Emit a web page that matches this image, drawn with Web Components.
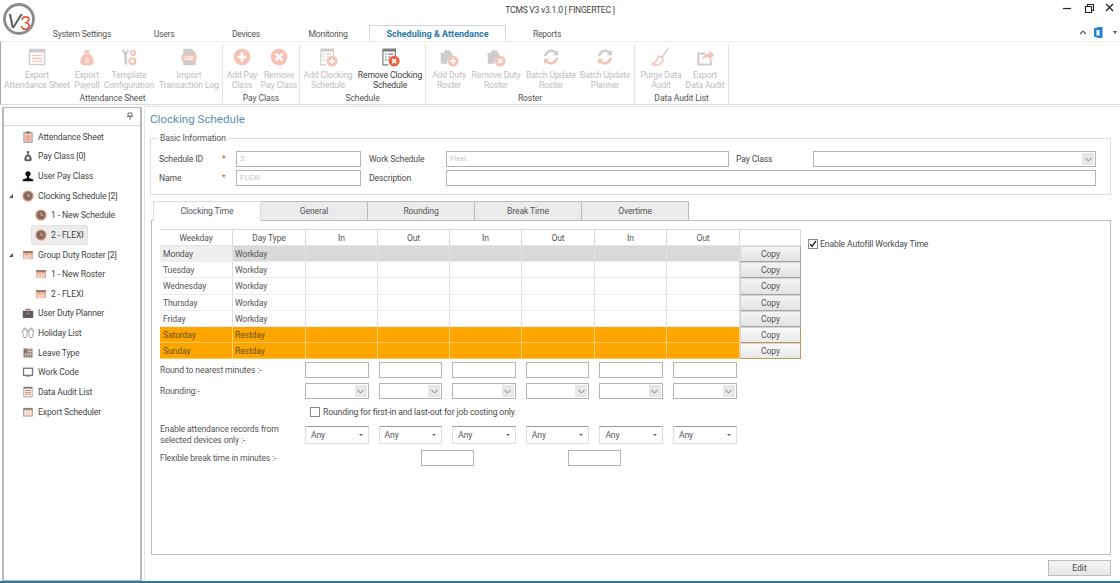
<!DOCTYPE html>
<html>
<head>
<meta charset="utf-8">
<title>TCMS V3</title>
<style>
  html, body { margin: 0; height: 100%; overflow: hidden; background: #fff; }
  body { font: 8.6px Roboto, "Liberation Sans", sans-serif; letter-spacing: -0.12px; color: #4a4a4a; }
</style>
</head>
<body>
<tcms-window>
  <title-bar slot="top"></title-bar>
  <ribbon-tabs slot="top"></ribbon-tabs>
  <ribbon-bar slot="top">
    <ribbon-group label="Attendance Sheet" width="220">
      <ribbon-button icon="sheet" w="68">Export<br>Attendance Sheet</ribbon-button>
      <ribbon-button icon="bag" w="32">Export<br>Payroll</ribbon-button>
      <ribbon-button icon="tools" w="52">Template<br>Configuration</ribbon-button>
      <ribbon-button icon="log" w="68">Import<br>Transaction Log</ribbon-button>
    </ribbon-group>
    <ribbon-group label="Pay Class" width="77">
      <ribbon-button icon="plus" w="38">Add Pay<br>Class</ribbon-button>
      <ribbon-button icon="cross" w="36">Remove<br>Pay Class</ribbon-button>
    </ribbon-group>
    <ribbon-group label="Schedule" width="126">
      <ribbon-button icon="docplus" w="56">Add Clocking<br>Schedule</ribbon-button>
      <ribbon-button icon="doccross" w="68" active>Remove Clocking<br>Schedule</ribbon-button>
    </ribbon-group>
    <ribbon-group label="Roster" width="209">
      <ribbon-button icon="rosterplus" w="46">Add Duty<br>Roster</ribbon-button>
      <ribbon-button icon="rostercross" w="48">Remove Duty<br>Roster</ribbon-button>
      <ribbon-button icon="sync" w="62">Batch Update<br>Roster</ribbon-button>
      <ribbon-button icon="sync" w="46">Batch Update<br>Planner</ribbon-button>
    </ribbon-group>
    <ribbon-group label="Data Audit List" width="94">
      <ribbon-button icon="broom" w="52">Purge Data<br>Audit</ribbon-button>
      <ribbon-button icon="export" w="36">Export<br>Data Audit</ribbon-button>
    </ribbon-group>
  </ribbon-bar>
  <nav-tree slot="side">
    <tree-item icon="clip">Attendance Sheet</tree-item>
    <tree-item icon="money">Pay Class [0]</tree-item>
    <tree-item icon="user">User Pay Class</tree-item>
    <tree-item icon="clock" arrow>Clocking Schedule [2]</tree-item>
    <tree-item icon="clock" child>1 - New Schedule</tree-item>
    <tree-item icon="clock" child selected>2 - FLEXI</tree-item>
    <tree-item icon="roster" arrow>Group Duty Roster [2]</tree-item>
    <tree-item icon="roster" child>1 - New Roster</tree-item>
    <tree-item icon="roster" child>2 - FLEXI</tree-item>
    <tree-item icon="case">User Duty Planner</tree-item>
    <tree-item icon="flops">Holiday List</tree-item>
    <tree-item icon="grid">Leave Type</tree-item>
    <tree-item icon="code">Work Code</tree-item>
    <tree-item icon="lines">Data Audit List</tree-item>
    <tree-item icon="sched">Export Scheduler</tree-item>
  </nav-tree>
  <clocking-page slot="main"></clocking-page>
</tcms-window>

<script>
const ORANGE = "#e9623f";
const GREY = "#7d7d7d";

const badge = (kind) => `
  <circle cx="17" cy="17" r="6.5" fill="${ORANGE}"/>
  ${kind === "plus"
    ? `<path d="M17 13.6v6.8M13.6 17h6.8" stroke="#fff" stroke-width="2"/>`
    : `<path d="M14.6 14.6l4.8 4.8M19.4 14.6l-4.8 4.8" stroke="#fff" stroke-width="2"/>`}`;

const docLines = `
  <path d="M3.5 2.5h15v9M10 21.5H3.5v-19" fill="#fff" stroke="${GREY}" stroke-width="1.4"/>
  <rect x="3.5" y="2.5" width="15" height="3" fill="${GREY}"/>
  <path d="M6 8.5h2M10 8.5h6M6 12h2M10 12h3M6 15.5h2M10 15.5h1" stroke="${GREY}" stroke-width="1.4"/>`;

const folder = `
  <path d="M2 7h4l1-3h6l1 3h2v4a7 7 0 0 0-6 9H2z" fill="${GREY}"/>`;

const RIBBON_ICONS = {
  sheet: `<rect x="3" y="3" width="18" height="18" fill="#fff" stroke="${GREY}" stroke-width="1.6"/>
    <rect x="3" y="3" width="18" height="3.5" fill="${GREY}"/>
    <path d="M6 10h12M6 13.5h12M6 17h12" stroke="${ORANGE}" stroke-width="1.5"/>`,
  bag: `<path d="M8 2.500l2 2 2-1.500 2 1.500 2-2-1.500 5h-5z" fill="${ORANGE}"/>
    <path d="M9 8h6c3 2.500 5 6 5 9.500 0 3-2 4.500-4 4.500H8c-2 0-4-1.500-4-4.500C4 14 6 10.500 9 8z" fill="${ORANGE}"/>
    <text x="12" y="19" text-anchor="middle" font-size="9" fill="#fff" font-family="Roboto">$</text>`,
  tools: `<path d="M6 2c-1.500.5-2 2-2 3 0 1.500 1 2.500 2 3l1 13h3l-.5-13c1.500-.8 2-2 2-3.200 0-1-.4-2-1.500-2.800v3.500H7z" fill="${GREY}"/>
    <circle cx="17" cy="7" r="2.600" fill="none" stroke="${ORANGE}" stroke-width="2.200"/>
    <circle cx="16" cy="17" r="3.500" fill="none" stroke="${ORANGE}" stroke-width="2.600"/>`,
  log: `<path d="M5 2h10l5 5v15H5z" fill="${GREY}"/>
    <rect x="3" y="9" width="18" height="8" rx="1" fill="${ORANGE}"/>
    <text x="12" y="15.500" text-anchor="middle" font-size="6" font-weight="700" fill="#fff" font-family="Roboto">LOG</text>`,
  plus: `<circle cx="12" cy="12" r="10" fill="${ORANGE}"/><path d="M12 6.500v11M6.500 12h11" stroke="#fff" stroke-width="3.200"/>`,
  cross: `<circle cx="12" cy="12" r="10" fill="${ORANGE}"/><path d="M8 8l8 8M16 8l-8 8" stroke="#fff" stroke-width="3.200"/>`,
  docplus: docLines + badge("plus"),
  doccross: docLines + badge("cross"),
  rosterplus: folder + badge("plus"),
  rostercross: folder + badge("cross"),
  sync: `<path d="M5 11a7.500 7.500 0 0 1 13-4" fill="none" stroke="${GREY}" stroke-width="3"/>
    <path d="M20.500 3.500v6.500h-6.500z" fill="${GREY}"/>
    <path d="M19 13a7.500 7.500 0 0 1-13 4" fill="none" stroke="${ORANGE}" stroke-width="3"/>
    <path d="M3.500 20.500v-6.500h6.500z" fill="${ORANGE}"/>`,
  broom: `<path d="M21 1l-8 12" stroke="${GREY}" stroke-width="1.500"/>
    <path d="M9 11c2 0 5 1.500 6 4-1 4-6 7-9 7-2 0-4-1-5-2 3 0 6-3 8-9z" fill="none" stroke="${ORANGE}" stroke-width="1.800"/>`,
  export: `<path d="M12 8H4v13h15v-6" fill="none" stroke="${GREY}" stroke-width="2.600"/>
    <path d="M8 17c0-6 4-9 9-9V4l6 6-6 6v-4c-4 0-7 1-9 5z" fill="${ORANGE}"/>`,
};

const TREE_ICONS = {
  clip: `<rect x="2.500" y="2" width="11" height="13" fill="#f4c6b4" stroke="#888"/>
    <rect x="5.500" y=".5" width="5" height="3" fill="#777"/>
    <path d="M5 7h6M5 9.500h6M5 12h6" stroke="#d98a70"/>`,
  money: `<path d="M6 1l2 1 2-1-1 4H7z" fill="#555"/>
    <path d="M6.500 5.500h3C12 7.500 13 10 13 12c0 2-1 3-3 3H6c-2 0-3-1-3-3 0-2 1-4.500 3.500-6.500z" fill="#666"/>
    <circle cx="8" cy="10.500" r="2" fill="#eee"/>`,
  user: `<circle cx="8" cy="5" r="3.500" fill="#111"/><path d="M6.500 8h3v2.500l5.500 2V15H1v-2.500l5.500-2z" fill="#111"/>`,
  clock: `<circle cx="8" cy="8" r="6.500" fill="#7a6a62" stroke="#e58a68" stroke-width="1.800"/>
    <path d="M8 4.500V8.300h3.200" fill="none" stroke="#ddd" stroke-width="1"/>`,
  roster: `<rect x="1.500" y="3" width="13" height="10.500" fill="#e9a68d"/>
    <rect x="1.500" y="3" width="13" height="2" fill="#8a6a5a"/>
    <path d="M4 7v6M6.500 9v4M9 6.500v6.500M11.500 8v5" stroke="#fff" stroke-width="1.200"/>`,
  case: `<rect x="1" y="5" width="14" height="9.500" rx="1" fill="#5d5d5d"/>
    <path d="M5.500 5V3h5v2" fill="none" stroke="#5d5d5d" stroke-width="1.300"/>
    <rect x="6" y="8" width="4" height="1.500" fill="#e58a68"/>`,
  flops: `<path d="M4 1.500C1.500 1.500.5 4 1 7.500c.4 3 1 7 3 7s2.600-4 3-7c.4-3.500-.6-6-3-6zM12 1.500c-2.400 0-3.400 2.500-3 6 .4 3 1 7 3 7s2.600-4 3-7c.5-3.500-.5-6-3-6z" fill="#fff" stroke="#8a8a8a" stroke-width="1.100"/>
    <path d="M1.500 5.500L4 3l2.500 2.500M9.500 5.500L12 3l2.500 2.500" fill="none" stroke="#8a8a8a"/>`,
  grid: `<rect x="2" y="2" width="12" height="12" fill="#8c7168"/>
    <path d="M8 2.500h5.500M8 6h5.500M8 9.500h5.500M2.500 9.500h5M8 2.500v11M11 2.500v11M5 9.500v4" stroke="#eee" stroke-width=".8"/>`,
  code: `<rect x="2" y="3" width="12" height="9.500" fill="#fff" stroke="#777" stroke-width="1.800"/>
    <path d="M5 12.500h6v1.500H5z" fill="#777"/>`,
  lines: `<rect x="2.500" y="1.500" width="11" height="13" fill="#fff" stroke="#888"/>
    <rect x="2.500" y="1.500" width="11" height="2" fill="#777"/>
    <path d="M4 6h8M4 8.500h8M4 11h8" stroke="#e0764f" stroke-width="1.200"/>`,
  sched: `<rect x="2" y="3" width="12" height="10.500" fill="#f0b9a3" stroke="#999"/>
    <rect x="2" y="3" width="12" height="2" fill="#777"/>
    <path d="M5 5v8M8 5v8M11 5v8M2.500 8h11M2.500 10.500h11" stroke="#fff" stroke-width=".8"/>`,
};

class TcmsWindow extends HTMLElement {
  constructor() {
    super();
    this.attachShadow({ mode: "open" });
    this.shadowRoot.innerHTML = `
      <style>
        :host { display: flex; flex-direction: column; width: 1120px; height: 583px; box-sizing: border-box;
          border-bottom: 2px solid #2f7698; background: #fff; }
        .body { flex: 1; display: flex; min-height: 0; margin-top: 2px; }
        .side { width: 140px; margin-left: 2px; border: 1px solid #b8b8b8; border-width: 1px 2px 1px 2px; box-sizing: border-box; }
        .main { flex: 1; margin-left: 2px; min-width: 0; margin-top: -1px; }
      </style>
      <slot name="top"></slot>
      <div class="body">
        <div class="side"><slot name="side"></slot></div>
        <div class="main"><slot name="main"></slot></div>
      </div>`;
  }
}

class TitleBar extends HTMLElement {
  constructor() {
    super();
    this.attachShadow({ mode: "open" });
    this.shadowRoot.innerHTML = `
      <style>
        :host { display: block; height: 25px; position: relative; }
        .title { text-align: center; line-height: 20px; color: #444; letter-spacing: -0.25px; }
        .logo { position: absolute; left: 2px; top: 2px; letter-spacing: 0; }
        .btns { position: absolute; right: 0; top: 0; display: flex; }
        .btns svg { display: block; }
      </style>
      <div class="title">TCMS V3 v3.1.0 [ FINGERTEC ]</div>
      <svg class="logo" width="34" height="34" viewBox="0 0 34 34">
        <circle cx="17" cy="17" r="14.500" fill="#fff" stroke="#8c8c8c" stroke-width="2.800"/>
        <text x="5" y="26" font-size="21" font-style="italic" font-family="Liberation Sans" fill="#555">V</text>
        <text x="18" y="27.500" font-size="19" font-family="Lato" fill="#d9552f">3</text>
      </svg>
      <div class="btns">
        <svg width="60" height="20" viewBox="0 0 60 20">
          <path d="M3 8.500h8" stroke="#222" stroke-width="1.200"/>
          <path d="M25.500 6.500h6v6h-6zM27.500 6.500V4.500h6v6h-2" fill="none" stroke="#222" stroke-width="1.100"/>
          <path d="M46 4l7 7M53 4l-7 7" stroke="#222" stroke-width="1.300"/>
        </svg>
      </div>`;
  }
}

class RibbonTabs extends HTMLElement {
  constructor() {
    super();
    this.attachShadow({ mode: "open" });
    this.shadowRoot.innerHTML = `
      <style>
        :host { display: flex; height: 16px; padding-left: 41px; position: relative; align-items: stretch; }
        span { width: 82px; text-align: center; line-height: 18px; color: #555; box-sizing: border-box; letter-spacing: -0.25px; }
        .on { width: 137px; color: #2a7ba8; font-size: 9px; letter-spacing: 0; font-weight: 700; background: #fff; border: 1px solid #d4d4d4; border-bottom: 0; line-height: 17px; }
        .extra { position: absolute; right: 0; top: 0; }
      </style>
      <span>System Settings</span><span>Users</span><span>Devices</span><span>Monitoring</span>
      <span class="on">Scheduling &amp; Attendance</span><span>Reports</span>
      <svg class="extra" width="44" height="16" viewBox="0 0 44 16">
        <path d="M4 9l3-3 3 3" fill="none" stroke="#555" stroke-width="1.100"/>
        <path d="M18 3.500l4.500-1.500h4v11h-4L18 11.500z" fill="#1f7fd0"/>
        <path d="M20.500 5h3v5.500h-3z" fill="#fff"/>
        <path d="M37 6h4l-2 3z" fill="#555"/>
      </svg>`;
  }
}

class RibbonBar extends HTMLElement {
  constructor() {
    super();
    this.attachShadow({ mode: "open" });
    this.shadowRoot.innerHTML = `
      <style>
        :host { display: flex; height: 64px; padding-left: 2px; box-sizing: border-box; border-top: 1px solid #ececec; border-bottom: 1px solid #dcdcdc; border-left: 1px solid #aaa; }
      </style>
      <slot></slot>`;
  }
}

class RibbonGroup extends HTMLElement {
  constructor() {
    super();
    this.attachShadow({ mode: "open" });
    const width = this.getAttribute("width");
    this.shadowRoot.innerHTML = `
      <style>
        :host { display: flex; flex-direction: column; width: ${width}px; box-sizing: border-box; border-right: 1px solid #e2e2e2; margin-top: 2px; }
        .btns { flex: 1; display: flex; }
        .label { text-align: center; line-height: 12px; color: #555; }
      </style>
      <div class="btns"><slot></slot></div>
      <div class="label">${this.getAttribute("label")}</div>`;
  }
}

class RibbonButton extends HTMLElement {
  constructor() {
    super();
    this.attachShadow({ mode: "open" });
    const active = this.hasAttribute("active");
    this.shadowRoot.innerHTML = `
      <style>
        :host { display: flex; flex-direction: column; align-items: center; width: ${this.getAttribute("w")}px; flex: none; white-space: nowrap;
          color: ${active ? "#3c3c3c" : "#bdbdbd"}; line-height: 10px; }
        svg { display: block; margin: 3px 0 3px; opacity: ${active ? 1 : 0.38}; }
        .t { text-align: center; }
      </style>
      <svg width="20" height="20" viewBox="0 0 24 24">${RIBBON_ICONS[this.getAttribute("icon")]}</svg>
      <div class="t"><slot></slot></div>`;
  }
}

class NavTree extends HTMLElement {
  constructor() {
    super();
    this.attachShadow({ mode: "open" });
    this.shadowRoot.innerHTML = `
      <style>
        :host { display: block; }
        .head { height: 17px; border-bottom: 1px solid #d8d8d8; position: relative; margin-bottom: 1px; }
        svg { position: absolute; right: 6px; top: 4px; }
      </style>
      <div class="head"><svg width="8" height="8" viewBox="0 0 8 8"><path d="M2 1h4v3H2zM1 4.500h6M4 4.500V8" fill="none" stroke="#777"/></svg></div>
      <div class="items"><slot></slot></div>`;
  }
}

class TreeItem extends HTMLElement {
  constructor() {
    super();
    this.attachShadow({ mode: "open" });
    const child = this.hasAttribute("child");
    const selected = this.hasAttribute("selected");
    this.shadowRoot.innerHTML = `
      <style>
        :host { display: flex; height: 19.640px; align-items: center; color: #444; white-space: nowrap; padding-left: ${child ? 27 : 14}px; }
        .pick { display: flex; align-items: center; height: 100%; padding: 0 5px 0 4px; border-radius: 3px; ${selected ? "background: #ececec; box-shadow: inset 0 0 0 1px #e2e2e2;" : ""} }
        .arrow { width: 0; position: relative; }
        .arrow i { position: absolute; left: -9px; top: -2px; border-style: solid; border-width: 0 0 4px 4px; border-color: transparent transparent #555 transparent; }
        svg { display: block; margin-right: 4px; flex: none; }
      </style>
      ${this.hasAttribute("arrow") ? "<div class='arrow'><i></i></div>" : ""}
      <div class="pick">
        <svg width="12" height="12" viewBox="0 0 16 16">${TREE_ICONS[this.getAttribute("icon")]}</svg>
        <slot></slot>
      </div>`;
  }
}

class TextBox extends HTMLElement {
  constructor() {
    super();
    this.attachShadow({ mode: "open" });
    this.shadowRoot.innerHTML = `
      <style>
        :host { display: block; box-sizing: border-box; height: 16px; border: 1px solid #b4b4b4; background: #fff; color: #c4c4c4; line-height: 14px; padding-left: 3px; font-size: 8px; }
      </style>
      <slot></slot>`;
  }
}

class ComboBox extends HTMLElement {
  constructor() {
    super();
    this.attachShadow({ mode: "open" });
    this.shadowRoot.innerHTML = `
      <style>
        :host { display: flex; justify-content: flex-end; box-sizing: border-box; height: 16px; border: 1px solid #b4b4b4; background: #fff; }
        .b { width: 12px; margin: 1px; background: #e7e7e7; display: flex; align-items: center; justify-content: center; }
      </style>
      <div class="b"><svg width="7" height="5" viewBox="0 0 7 5"><path d="M.5 1l3 3 3-3" fill="none" stroke="#777"/></svg></div>`;
  }
}

class AnySelect extends HTMLElement {
  constructor() {
    super();
    this.attachShadow({ mode: "open" });
    this.shadowRoot.innerHTML = `
      <style>
        :host { display: flex; align-items: center; justify-content: space-between; box-sizing: border-box; height: 18px; padding: 0 5px;
          border: 1px solid #dcdcdc; border-top-color: #999; background: #fff; color: #555; }
        i { border-style: solid; border-width: 2px 2px 0; border-color: #666 transparent transparent; }
      </style>
      <span>Any</span><i></i>`;
  }
}

class CheckBox extends HTMLElement {
  constructor() {
    super();
    this.attachShadow({ mode: "open" });
    const on = this.hasAttribute("checked");
    this.shadowRoot.innerHTML = `
      <style>
        :host { display: flex; align-items: center; gap: var(--gap, 3px); color: #4a4a4a; white-space: nowrap; height: 10px; }
        .box { width: 10px; height: 10px; box-sizing: border-box; border: 1px solid #8a8a8a; background: #fff; flex: none; }
        svg { display: block; }
      </style>
      <div class="box">${on ? `<svg width="8" height="8" viewBox="0 0 8 8"><path d="M1 4l2 2.500L7 1" fill="none" stroke="#222" stroke-width="1.300"/></svg>` : ""}</div>
      <slot></slot>`;
  }
}

class BasicInfo extends HTMLElement {
  constructor() {
    super();
    this.attachShadow({ mode: "open" });
    this.shadowRoot.innerHTML = `
      <style>
        :host { display: block; }
        fieldset { margin: 0; padding: 7px 14px 0 8px; border: 1px solid #dedede; height: 62px; box-sizing: border-box; }
        legend { padding: 0 2px; margin-left: -1px; line-height: 11px; color: #555; }
        .g { display: grid; grid-template-columns: 63px 14px 125px 8px 77px 283px 7px 77px 283px; grid-auto-rows: 16px; row-gap: 3px; align-items: center; }
        .star { color: #d9552f; }
        .wide { grid-column: 6 / -1; }
      </style>
      <fieldset>
        <legend>Basic Information</legend>
        <div class="g">
          <span>Schedule ID</span><span class="star">*</span><text-box>2</text-box><span></span>
          <span>Work Schedule</span><text-box>Flexi</text-box><span></span>
          <span>Pay Class</span><combo-box></combo-box>
          <span>Name</span><span class="star">*</span><text-box>FLEXI</text-box><span></span>
          <span>Description</span><text-box class="wide"></text-box>
        </div>
      </fieldset>`;
  }
}

class TabStrip extends HTMLElement {
  constructor() {
    super();
    this.attachShadow({ mode: "open" });
    this.shadowRoot.innerHTML = `
      <style>
        :host { display: flex; height: 20px; padding-left: 3px; margin-bottom: -1px; position: relative; }
        span { width: 107px; box-sizing: border-box; text-align: center; line-height: 19px; background: #ebebeb; border: 1px solid #bcbcbc; border-left: 0; color: #555; }
        .on { width: 108px; background: #fff; border: 1px solid #dcdcdc; border-bottom: 0; }
      </style>
      <span class="on">Clocking Time</span><span>General</span><span>Rounding</span><span>Break Time</span><span>Overtime</span>`;
  }
}

class ClockTable extends HTMLElement {
  constructor() {
    super();
    this.attachShadow({ mode: "open" });
    const days = [
      ["Monday", "Workday", "sel"], ["Tuesday", "Workday", ""], ["Wednesday", "Workday", ""],
      ["Thursday", "Workday", ""], ["Friday", "Workday", ""],
      ["Saturday", "Restday", "off"], ["Sunday", "Restday", "off"],
    ];
    const head = ["Weekday", "Day Type", "In", "Out", "In", "Out", "In", "Out", ""]
      .map((h) => `<div class="h">${h}</div>`).join("");
    const rows = days.map(([d, t, cls]) => `
      <div class="c ${cls} first">${d}</div><div class="c ${cls}">${t}</div>
      ${`<div class="c ${cls}"></div>`.repeat(6)}
      <div class="copy ${cls}">Copy</div>`).join("");
    this.shadowRoot.innerHTML = `
      <style>
        :host { display: grid; width: 641px; box-sizing: border-box; flex: none;
          grid-template-columns: 73px 73px 72px 72px 72px 73px 72px 73px 61px; grid-auto-rows: 16.150px;
          border-top: 1px solid #d9d9d9; align-self: flex-start; }
        .h { text-align: center; line-height: 16px; border-right: 1px solid #d8d8d8; border-bottom: 1px solid #e4e4e4; color: #555; box-sizing: border-box; }
        .h:first-child { border-left: 1px solid #e8e8e8; }
        .c { box-sizing: border-box; line-height: 17px; padding-left: 2px; border-right: 1px solid #dedede; border-bottom: 1px solid #ececec; color: #555; }
        .c.first { padding-left: 3px; }
        .c.sel { background: #d9d9d9; border-right-color: #e4e4e4; }
        .c.sel.first { background: #efefef; }
        .c.off { background: #ffa500; border-right-color: #ffd27a; border-bottom-color: #ffc65c; color: #6d5318; }
        .copy { box-sizing: border-box; text-align: center; line-height: 15px; color: #555; background: linear-gradient(#f4f4f4, #e3e3e3); border: 1px solid #d4d4d4; border-right-color: #a3a3a3; border-bottom-color: #a3a3a3; }
        .copy.off { border-right-color: #bd9a5a; border-bottom-color: #bd9a5a; background: linear-gradient(#fafafa, #e9e9e9); }
      </style>
      ${head}${rows}`;
  }
}

class TimeOptions extends HTMLElement {
  constructor() {
    super();
    this.attachShadow({ mode: "open" });
    const six = (tag) => `<${tag}></${tag}>`.repeat(6);
    this.shadowRoot.innerHTML = `
      <style>
        :host { display: grid; grid-template-columns: 135px repeat(6, 63.600px); column-gap: 10px; width: 577px; align-items: center; margin-top: 3px; }
        .lab { color: #555; line-height: 11px; }
        .chk { grid-column: 2 / -1; margin: 8px 0 7px 5px; }
        .two { grid-column: span 2; justify-self: center; width: 53px; }
        .gap { margin-top: 5px; }
        .ml { margin-top: 4px; }
      </style>
      <span class="lab">Round to nearest minutes :-</span>${six("text-box")}
      <span class="lab gap">Rounding:-</span>
      ${"<combo-box class='gap'></combo-box>".repeat(6)}
      <span></span><check-box class="chk">Rounding for first-in and last-out for job costing only.</check-box>
      <span class="lab">Enable attendance records from selected devices only :-</span>${six("any-select")}
      <span class="lab ml">Flexible break time in minutes :-</span>
      <span></span><text-box class="two ml"></text-box><text-box class="two ml"></text-box><span></span>`;
  }
}

class ClockingPage extends HTMLElement {
  constructor() {
    super();
    this.attachShadow({ mode: "open" });
    this.shadowRoot.innerHTML = `
      <style>
        :host { display: flex; flex-direction: column; height: 100%; box-sizing: border-box; padding: 0 9px 0 5px; border: 1px solid #e4e4e4; border-width: 1px 0 0 1px; }
        h1 { margin: 0; font: 400 11.600px/24px Roboto, "Liberation Sans", sans-serif; color: #5b8fae; height: 24px; letter-spacing: 0; }
        basic-info { margin: 2px 0 6px; }
        .panel { height: 335px; box-sizing: border-box; margin-left: 1px; border: 1px solid #bdbdbd; padding: 8px 0 0 8px; background: #fff; }
        .top { display: flex; gap: 7px; }
        .auto { margin-top: 10px; --gap: 2px; }
        .foot { display: flex; justify-content: flex-end; margin-top: 5px; }
        button { width: 63px; height: 16px; padding: 0; font: inherit; color: #444; border: 1px solid #bdbdbd; background: linear-gradient(#f5f5f5, #e6e6e6); }
      </style>
      <h1>Clocking Schedule</h1>
      <basic-info></basic-info>
      <tab-strip></tab-strip>
      <div class="panel">
        <div class="top">
          <clock-table></clock-table>
          <check-box class="auto" checked>Enable Autofill Workday Time</check-box>
        </div>
        <time-options></time-options>
      </div>
      <div class="foot"><button>Edit</button></div>`;
  }
}

customElements.define("tcms-window", TcmsWindow);
customElements.define("title-bar", TitleBar);
customElements.define("ribbon-tabs", RibbonTabs);
customElements.define("ribbon-bar", RibbonBar);
customElements.define("ribbon-group", RibbonGroup);
customElements.define("ribbon-button", RibbonButton);
customElements.define("nav-tree", NavTree);
customElements.define("tree-item", TreeItem);
customElements.define("text-box", TextBox);
customElements.define("combo-box", ComboBox);
customElements.define("any-select", AnySelect);
customElements.define("check-box", CheckBox);
customElements.define("basic-info", BasicInfo);
customElements.define("tab-strip", TabStrip);
customElements.define("clock-table", ClockTable);
customElements.define("time-options", TimeOptions);
customElements.define("clocking-page", ClockingPage);
</script>
</body>
</html>
